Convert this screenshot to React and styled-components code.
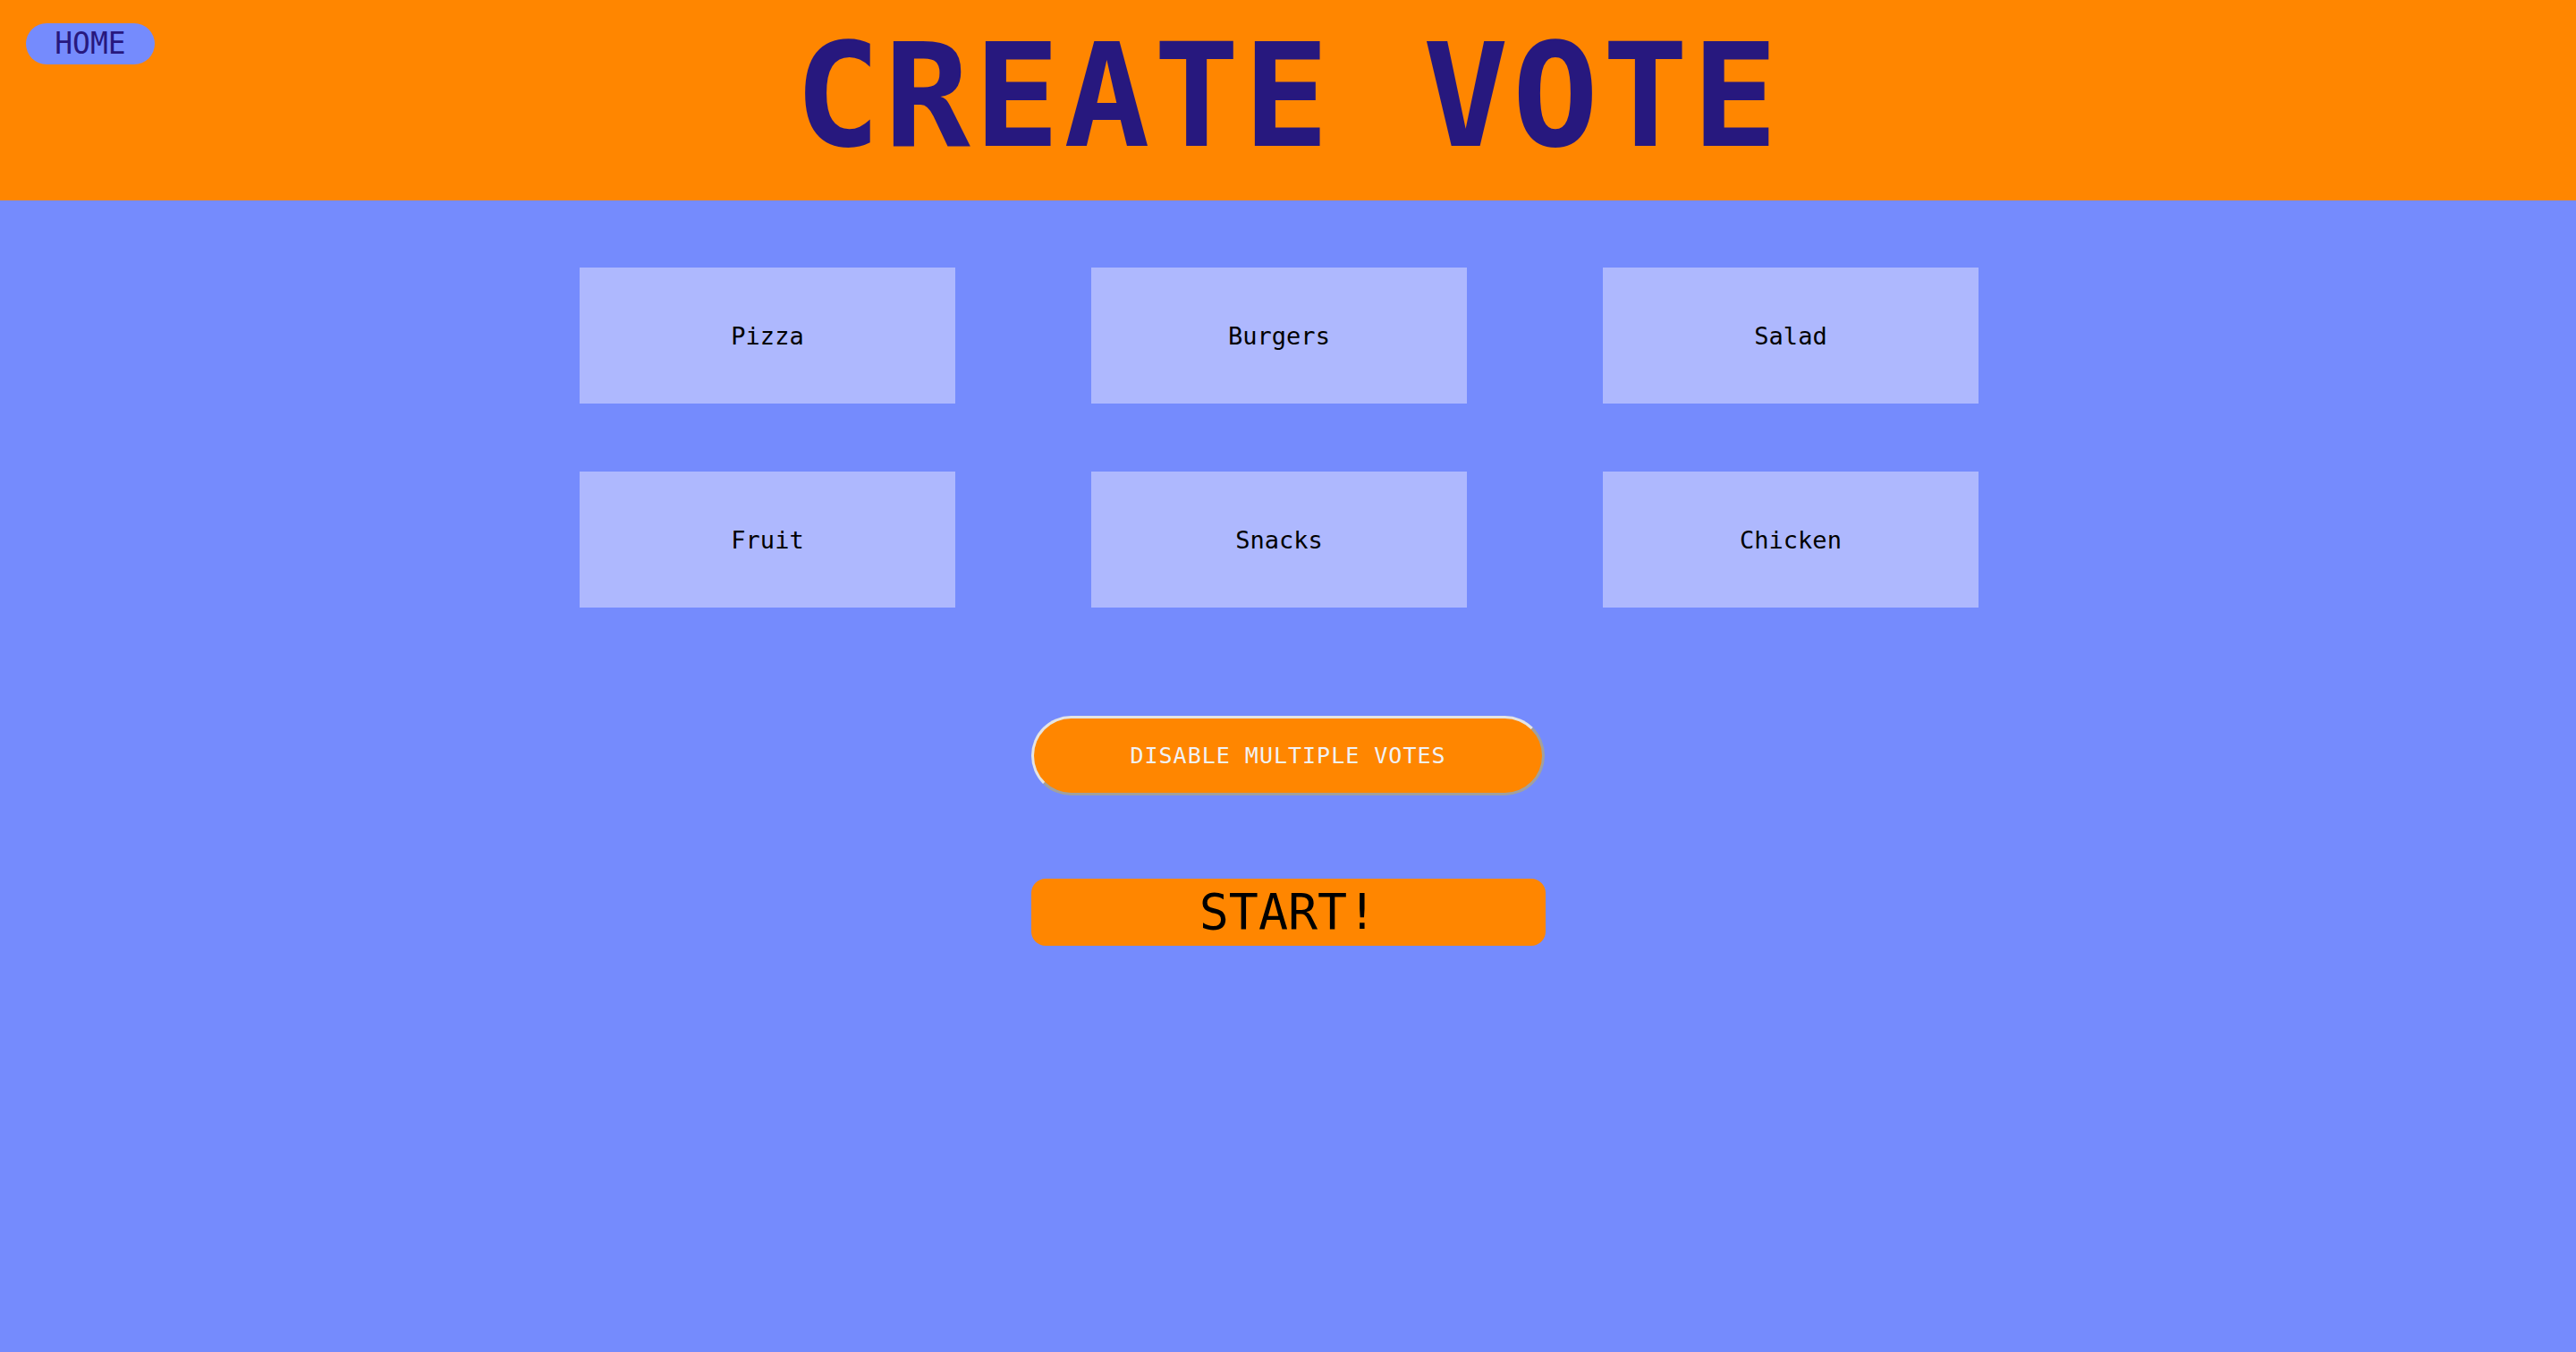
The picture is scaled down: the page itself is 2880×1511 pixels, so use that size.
import React, { useState } from 'react';
import styled, { createGlobalStyle } from 'styled-components';

const GlobalStyle = createGlobalStyle`
  html, body {
    margin: 0;
    padding: 0;
    background: #758bfd;
    font-family: "DejaVu Sans Mono", monospace;
  }
  #root {
    min-height: 100vh;
  }
`;

const Page = styled.div`
  min-height: 100vh;
  display: flex;
  flex-direction: column;
  align-items: center;
`;

const Header = styled.header`
  width: 100%;
  height: 224px;
  background: #ff8600;
  display: grid;
  grid-template-columns: 1fr auto 1fr;
  align-items: start;
`;

const HomeBtn = styled.button`
  justify-self: start;
  margin: 26px 0 0 29px;
  width: 144px;
  height: 46px;
  padding: 0;
  border: none;
  border-radius: 23px;
  background: #758bfd;
  color: #27187e;
  font-family: inherit;
  font-size: 33px;
  line-height: 46px;
  cursor: pointer;
`;

const Title = styled.h1`
  margin: 0;
  padding-top: 15px;
  font-size: 160px;
  line-height: 186px;
  letter-spacing: 4px;
  font-weight: bold;
  color: #27187e;
`;

const OptionGrid = styled.section`
  display: grid;
  grid-template-columns: repeat(3, 420px);
  grid-auto-rows: 152px;
  column-gap: 152px;
  row-gap: 76px;
  margin: 75px 20px 0 0;
`;

const Option = styled.div`
  display: flex;
  align-items: center;
  justify-content: center;
  background: #aeb8fe;
  color: #000;
  font-size: 27px;
`;

const ToggleBtn = styled.button`
  margin-top: 121px;
  width: 574px;
  height: 89px;
  border-width: 3px;
  border-style: solid;
  border-color: #e4e4e4 #a0a0a0 #a0a0a0 #e4e4e4;
  border-radius: 45px;
  background: #ff8600;
  color: #f1f2f6;
  font-family: inherit;
  font-size: 25px;
  letter-spacing: 1px;
  cursor: pointer;
`;

const StartBtn = styled.button`
  margin-top: 93px;
  width: 575px;
  height: 75px;
  border: none;
  border-radius: 16px;
  background: #ff8600;
  color: #000;
  font-family: inherit;
  font-size: 55px;
  line-height: 75px;
  padding: 0;
  cursor: pointer;
`;

const options = ['Pizza', 'Burgers', 'Salad', 'Fruit', 'Snacks', 'Chicken'];

const App = () => {
  const [multiple, setMultiple] = useState(true);

  return (
    <Page>
      <GlobalStyle />
      <Header>
        <HomeBtn>HOME</HomeBtn>
        <Title>CREATE VOTE</Title>
      </Header>
      <OptionGrid>
        {options.map((name) => (
          <Option key={name}>{name}</Option>
        ))}
      </OptionGrid>
      <ToggleBtn onClick={() => setMultiple(!multiple)}>
        {multiple ? 'DISABLE MULTIPLE VOTES' : 'ENABLE MULTIPLE VOTES'}
      </ToggleBtn>
      <StartBtn>START!</StartBtn>
    </Page>
  );
};

export default App;
